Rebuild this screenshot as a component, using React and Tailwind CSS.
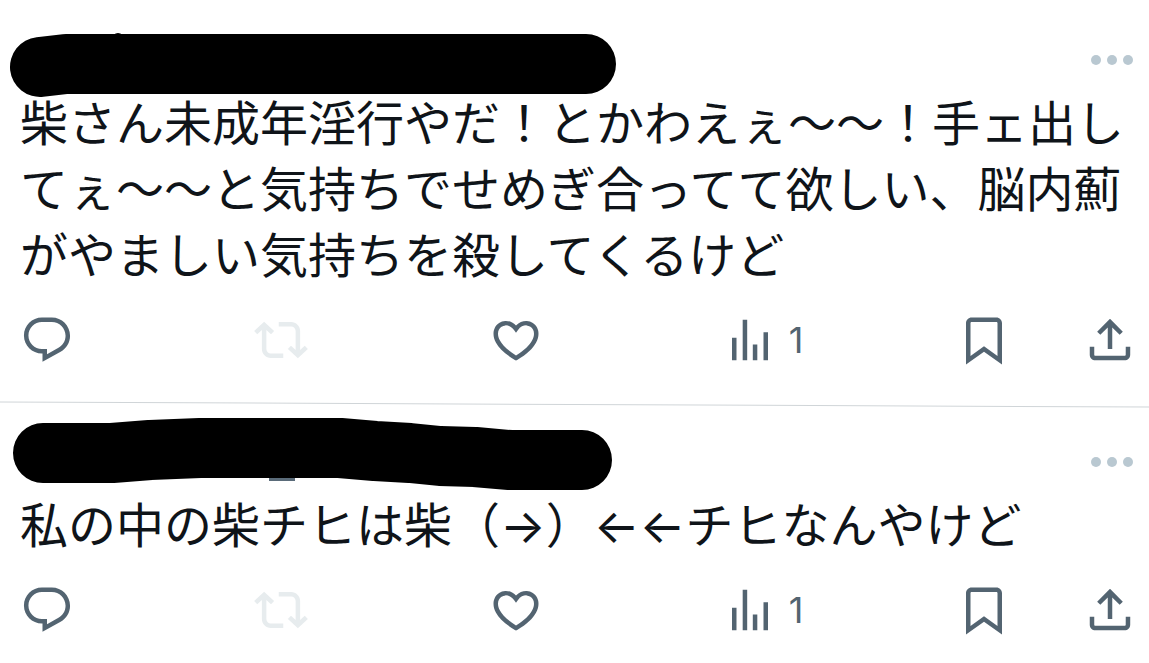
import React from "react";

const posts = [
    {
        id: 1,
        text: "柴さん未成年淫行やだ！とかわえぇ〜〜！手ェ出してぇ〜〜と気持ちでせめぎ合ってて欲しい、脳内薊がやましい気持ちを殺してくるけど",
        views: 1,
    },
    {
        id: 2,
        text: "私の中の柴チヒは柴（→）←←チヒなんやけど",
        views: 1,
    },
];

const icons = {
    reply: "M1.751 10c0-4.42 3.584-8 8.005-8h4.366c4.49 0 8.129 3.64 8.129 8.13 0 2.96-1.607 5.68-4.196 7.11l-8.054 4.46v-3.69h-.067c-4.49.1-8.183-3.51-8.183-8.01zm8.005-6c-3.317 0-6.005 2.69-6.005 6 0 3.37 2.77 6.08 6.138 6.01l.351-.01h1.761v2.3l5.087-2.81c1.951-1.08 3.163-3.13 3.163-5.36 0-3.39-2.744-6.13-6.129-6.13H9.756z",
    repost: "M4.5 3.88l4.432 4.14-1.364 1.46L5.5 7.55V16c0 1.1.896 2 2 2H13v2H7.5c-2.209 0-4-1.79-4-4V7.55L1.432 9.48.068 8.02 4.5 3.88zM16.5 6H11V4h5.5c2.209 0 4 1.79 4 4v8.45l2.068-1.93 1.364 1.46-4.432 4.14-4.432-4.14 1.364-1.46 2.068 1.93V8c0-1.1-.896-2-2-2z",
    like: "M16.697 5.5c-1.222-.06-2.679.51-3.89 2.16l-.805 1.09-.806-1.09C9.984 6.01 8.526 5.44 7.304 5.5c-1.243.07-2.349.78-2.91 1.91-.552 1.12-.633 2.78.479 4.82 1.074 1.97 3.257 4.27 7.129 6.61 3.87-2.34 6.052-4.64 7.126-6.61 1.111-2.04 1.03-3.7.477-4.82-.561-1.13-1.666-1.84-2.908-1.91zm4.187 7.69c-1.351 2.48-4.001 5.12-8.379 7.67l-.503.3-.504-.3c-4.379-2.55-7.029-5.19-8.382-7.67-1.36-2.5-1.41-4.86-.514-6.67.887-1.79 2.647-2.91 4.601-3.01 1.651-.09 3.368.56 4.798 2.01 1.429-1.45 3.146-2.1 4.796-2.01 1.954.1 3.714 1.22 4.601 3.01.896 1.81.846 4.17-.514 6.67z",
    views: "M8.75 21V3h2v18h-2zM18 21V8.5h2V21h-2zM4 21l.004-10h2L6 21H4zm9.248 0v-7h2v7h-2z",
    bookmark: "M4 4.5C4 3.12 5.119 2 6.5 2h11C18.881 2 20 3.12 20 4.5v18.44l-8-5.71-8 5.71V4.5zM6.5 4c-.276 0-.5.22-.5.5v14.56l6-4.29 6 4.29V4.5c0-.28-.224-.5-.5-.5h-11z",
    share: "M12 2.59l5.7 5.7-1.41 1.42L13 6.41V16h-2V6.41l-3.3 3.3-1.41-1.42L12 2.59zM21 15l-.02 3.51c0 1.38-1.12 2.49-2.5 2.49H5.5C4.11 21 3 19.88 3 18.5V15h2v3.5c0 .28.22.5.5.5h12.98c.28 0 .5-.22.5-.5L19 15h2z",
};

const Icon = ({ name }) => (
    <svg viewBox="0 0 24 24" className="w-[54px] h-[54px] shrink-0 fill-current" aria-hidden="true">
        <path d={icons[name]} />
    </svg>
);

// Marker strokes that cover the name of each author
const Redaction = ({ id }) => (
    <svg viewBox="0 0 640 80" className="absolute left-0 top-0 w-[640px] h-20 overflow-visible pointer-events-none" aria-hidden="true">
        {id === 1 ? (
            <>
                <path d="M40 40L66 37H586" fill="none" stroke="#000" strokeWidth="60" strokeLinecap="round" strokeLinejoin="round" />
                <circle cx="118" cy="12" r="6" />
            </>
        ) : (
            <>
                <path d="M269 48h26v4h-26z" fill="#5a6b79" />
                <path d="M43 24H112L150 21 200 19H340L375 22 410 24 440 27 475 28 510 31H582" fill="none" stroke="#000" strokeWidth="60" strokeLinecap="round" strokeLinejoin="round" />
            </>
        )}
    </svg>
);

const Post = ({ post }) => (
    <article className="pl-5 pr-3">
        <header className="h-16 flex items-center justify-end">
            <button aria-label="もっと見る" className="text-[#b9c8d1]">
                <svg viewBox="0 0 48 16" className="w-12 h-4 fill-current" aria-hidden="true">
                    <circle cx="7" cy="9" r="5" />
                    <circle cx="23" cy="9" r="5" />
                    <circle cx="39" cy="9" r="5" />
                </svg>
            </button>
        </header>
        <p className="text-[48px] leading-[66px]">{post.text}</p>
        <div className="mt-6 flex text-[#536471]">
            <div className="flex-1 grid grid-cols-4">
                <button aria-label="返信" className="justify-self-start">
                    <Icon name="reply" />
                </button>
                <button aria-label="リポスト" disabled className="justify-self-start text-[#e7ecee]">
                    <Icon name="repost" />
                </button>
                <button aria-label="いいね" className="justify-self-start">
                    <Icon name="like" />
                </button>
                <a href="#views" aria-label="表示回数" className="justify-self-start flex items-center gap-3">
                    <Icon name="views" />
                    <span className="text-[36px] leading-[54px]">{post.views}</span>
                </a>
            </div>
            <div className="w-[180px] flex justify-between">
                <button aria-label="ブックマーク">
                    <Icon name="bookmark" />
                </button>
                <button aria-label="共有">
                    <Icon name="share" />
                </button>
            </div>
        </div>
    </article>
);

const App = () => {
    return (
        <main lang="ja" className="min-h-screen bg-white text-[#0f1419] font-['Inter','Noto_Sans_CJK_JP',sans-serif] overflow-hidden">
            <div className="relative mt-[27px]">
                <Post post={posts[0]} />
                <Redaction id={1} />
            </div>
            <div className="mt-[37px] h-px bg-[#d0d5d8] rotate-[0.25deg]" />
            <div className="relative mt-6">
                <Post post={posts[1]} />
                <Redaction id={2} />
            </div>
        </main>
    );
};

export default App;
